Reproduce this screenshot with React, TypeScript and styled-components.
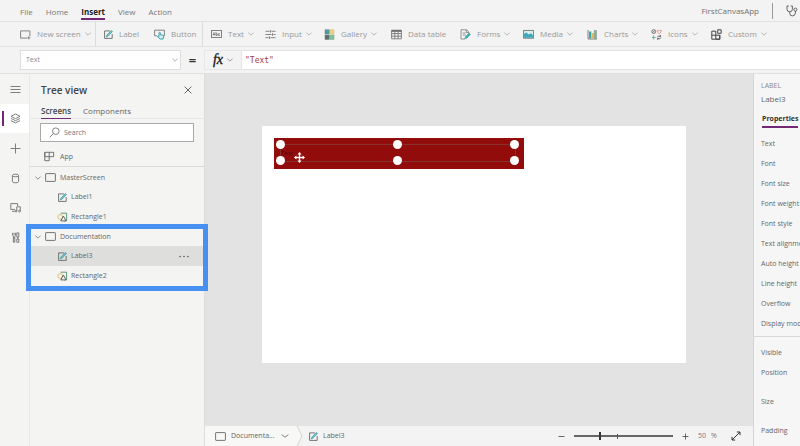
import React from "react";
import styled, { createGlobalStyle, css } from "styled-components";

const GlobalStyle = createGlobalStyle`
  * { box-sizing: border-box; }
  html, body, #root { height: 100%; }
  body { margin: 0; overflow: hidden; font-family: "Open Sans", "Noto Sans", sans-serif; font-size: 8px; line-height: 12px; color: #666; background: #f3f3f3; }
  button, input, select { font: inherit; color: inherit; margin: 0; padding: 0; border: 0; background: none; border-radius: 0; outline: none; }
  button { cursor: pointer; white-space: nowrap; }
  svg { display: block; flex: none; overflow: visible; }
  h2, p, ul { margin: 0; padding: 0; font-weight: 400; list-style: none; }
`;

const purple = "#742774";

const Shell = styled.div`
  height: 100vh;
  display: flex;
  flex-direction: column;
  background: #f3f3f3;
`;

const MenuBar = styled.header`
  height: 22px;
  display: flex;
  justify-content: space-between;
  padding: 0 2px 0 20px;
  border-bottom: 1px solid #e2e2e2;
`;

const Menu = styled.nav`
  display: flex;
  gap: 13px;
  padding-top: 6px;
`;

const MenuItem = styled.button<{ $active?: boolean }>`
  height: 14px;
  line-height: 12px;
  border-bottom: 2px solid transparent;
  color: #777;
  ${(p) => p.$active && css`color: #222; font-weight: 700; border-color: ${purple};`}
`;

const AppInfo = styled.div`
  display: flex;
  align-items: center;
  gap: 13px;
  color: #707070;
`;

const InfoDivider = styled.span`
  width: 1px;
  height: 16px;
  background: #999;
`;

const Toolbar = styled.div`
  height: 25px;
  display: grid;
  grid-template-columns: 76px 58px 49px 62px 59px 67px 69px 63px 64px 64px 60px 60px;
  align-items: stretch;
  padding-left: 20px;
  border-bottom: 1px solid #e2e2e2;
`;

const Tool = styled.button<{ $divided?: boolean; $inset?: boolean }>`
  display: flex;
  align-items: center;
  gap: 6px;
  color: #999;
  padding-left: ${(p) => (p.$inset ? 8 : 0)}px;
  border-right: ${(p) => (p.$divided ? "1px solid #dcdcdc" : "0")};
`;

const ToolText = styled.span`
  display: flex;
  align-items: center;
  gap: 4px;
`;

const FormulaBar = styled.div`
  height: 27px;
  display: flex;
  align-items: center;
  padding-left: 20px;
  border-bottom: 1px solid #e0e0e0;
`;

const PropertyPicker = styled.label`
  display: grid;
  width: 161px;
  height: 20px;
  align-items: center;
  background: #fff;
  border: 1px solid #dedede;
  color: #8a8a8a;
  & > * { grid-area: 1 / 1; }
  & > svg { justify-self: end; margin-right: 2px; pointer-events: none; }
`;

const PropertySelect = styled.select`
  appearance: none;
  width: 100%;
  height: 18px;
  padding-left: 5px;
  font-size: 7px;
`;

const EqualSign = styled.span`
  width: 23px;
  text-align: center;
  font-size: 13px;
  line-height: 20px;
  font-weight: 700;
  color: #333;
`;

const FxButton = styled.button`
  width: 38px;
  height: 20px;
  display: flex;
  align-items: center;
  justify-content: center;
  gap: 4px;
  border: 1px solid #e6e6e6;
  color: #777;
`;

const FxMark = styled.span`
  font: italic 400 14px/16px "Liberation Serif", serif;
  color: #111;
  -webkit-text-stroke: 0.3px #111;
`;

const FormulaInput = styled.input`
  flex: 1;
  min-width: 0;
  height: 20px;
  padding-left: 3px;
  background: #fff;
  border: solid #e2e2e2;
  border-width: 1px 0;
  color: #a5403c;
  font-family: "DejaVu Sans Mono", monospace;
`;

const Workspace = styled.div`
  flex: 1;
  min-height: 0;
  display: flex;
`;

const Rail = styled.nav`
  width: 30px;
  flex: none;
  display: grid;
  grid-auto-rows: 30px 29px 30px;
  border-right: 1px solid #e8e8e8;
  background: #f4f4f3;
`;

const RailButton = styled.button<{ $active?: boolean }>`
  display: grid;
  place-items: center;
  color: #707070;
  border-left: 2px solid transparent;
  ${(p) => p.$active && css`
    background: #fff;
    &::before { content: ""; grid-area: 1 / 1; justify-self: start; width: 2px; height: 15px; background: ${purple}; }
    & > svg { grid-area: 1 / 1; }
  `}
`;

const TreePanel = styled.aside`
  width: 175px;
  flex: none;
  background: #f4f4f3;
  border-right: 1px solid #dedede;
`;

const TreeHeader = styled.div`
  height: 31px;
  display: flex;
  align-items: center;
  justify-content: space-between;
  padding: 0 12px 0 11px;
`;

const TreeTitle = styled.h2`
  font-size: 10px;
  line-height: 14px;
  font-weight: 600;
  color: #444;
`;

const IconButton = styled.button`
  display: grid;
  place-items: center;
  color: #555;
`;

const Tabs = styled.div`
  height: 14px;
  display: flex;
  gap: 12px;
  padding-left: 11px;
  border-bottom: 1px solid #e8e8e8;
`;

const Tab = styled.button<{ $active?: boolean }>`
  height: 14px;
  line-height: 10px;
  padding-bottom: 2px;
  border-bottom: 1px solid transparent;
  color: #666;
  ${(p) => p.$active && css`color: #444; font-weight: 600; border-color: ${purple};`}
`;

const SearchBox = styled.label`
  height: 19px;
  display: flex;
  align-items: center;
  gap: 4px;
  margin: 4px 10px 5px 10px;
  padding-left: 8px;
  background: #fff;
  border: 1px solid #aaa;
  color: #777;
`;

const SearchInput = styled.input`
  flex: 1;
  min-width: 0;
  font-size: 7px;
  &::placeholder { color: #777; opacity: 1; }
`;

const AppRow = styled.button`
  width: 100%;
  height: 20px;
  display: flex;
  align-items: center;
  gap: 5px;
  padding-left: 14px;
  border-bottom: 1px solid #dadada;
  font-size: 7px;
`;

const Groups = styled.div`
  padding-top: 1px;
`;

const Group = styled.section`
  position: relative;
  font-size: 7px;
`;

const GroupHeader = styled.button`
  width: 100%;
  height: 19px;
  display: flex;
  align-items: center;
  gap: 4px;
  padding-left: 5px;
`;

const TreeRow = styled.button<{ $selected?: boolean }>`
  width: 100%;
  height: 20px;
  display: flex;
  align-items: center;
  gap: 4px;
  padding: 0 15px 0 28px;
  background: ${(p) => (p.$selected ? "#dededd" : "transparent")};
`;

const RowName = styled.span`
  flex: 1;
  text-align: left;
`;

const Highlight = styled.span`
  position: absolute;
  inset: -3px -4px -5px -4px;
  border: 5px solid #4690f2;
  pointer-events: none;
`;

const Stage = styled.main`
  flex: 1;
  min-width: 0;
  display: flex;
  flex-direction: column;
  background: #e3e3e3;
`;

const StageArea = styled.div`
  flex: 1;
  display: flex;
  padding: 52px 67px 63px 57px;
`;

const Page = styled.div`
  position: relative;
  flex: 1;
  background: #fff;
`;

const RedRectangle = styled.div`
  position: absolute;
  left: 12px;
  top: 12px;
  width: 250px;
  height: 31px;
  background: #930c0c;
`;

const SelectedLabel = styled.div`
  position: absolute;
  left: 6px;
  top: 6px;
  width: 236px;
  height: 18px;
  border: 1px solid #863229;
  color: #4a0404;
  font-size: 6px;
  line-height: 16px;
`;

const Handle = styled.span<{ $x: string; $y: string }>`
  position: absolute;
  left: ${(p) => p.$x};
  top: ${(p) => p.$y};
  width: 9px;
  height: 9px;
  margin: -5px 0 0 -5px;
  border-radius: 50%;
  background: #fff;
`;

const MoveCursor = styled.svg`
  position: absolute;
  left: 13px;
  top: 7px;
`;

const StageFooter = styled.footer`
  height: 20px;
  display: flex;
  align-items: center;
  justify-content: space-between;
  background: #f3f3f3;
  font-size: 7px;
`;

const Crumbs = styled.div`
  display: flex;
  align-items: center;
  height: 100%;
`;

const Crumb = styled.button<{ $lead?: boolean }>`
  height: 100%;
  display: flex;
  align-items: center;
  gap: 5px;
  padding-left: ${(p) => (p.$lead ? 10 : 6)}px;
  width: ${(p) => (p.$lead ? "92px" : "auto")};
  background: ${(p) => (p.$lead ? "#f8f8f7" : "transparent")};
`;

const CrumbText = styled.span<{ $wide?: boolean }>`
  width: ${(p) => (p.$wide ? "45px" : "auto")};
  text-align: left;
`;

const ZoomTools = styled.div`
  display: flex;
  align-items: center;
  gap: 9px;
  padding-right: 12px;
`;

const ZoomRange = styled.input`
  appearance: none;
  width: 99px;
  height: 8px;
  background:
    linear-gradient(#555, #555) 43px 50% / 1px 5px no-repeat,
    linear-gradient(#666, #666) 0 50% / 100% 2px no-repeat;
  &::-webkit-slider-thumb { appearance: none; width: 2px; height: 8px; background: #333; }
`;

const ZoomValue = styled.span`
  display: flex;
  gap: 5px;
  width: 24px;
  color: #777;
`;

const Properties = styled.aside`
  width: 47px;
  flex: none;
  overflow: hidden;
  padding-top: 6px;
  background: #f6f6f6;
  border-left: 1px solid #d4d4d4;
  white-space: nowrap;
  font-size: 7px;
`;

const Kind = styled.p`
  padding-left: 7px;
  line-height: 12px;
  color: #8a8a8a;
`;

const ControlName = styled.h2`
  padding-left: 7px;
  font-size: 8px;
  line-height: 14px;
  color: #666;
`;

const PropertyTab = styled.button`
  display: block;
  margin: 7px 0 6px 8px;
  height: 15px;
  font-size: 7px;
  line-height: 11px;
  padding-bottom: 2px;
  font-weight: 700;
  color: #333;
  border-bottom: 2px solid ${purple};
`;

const PropertyList = styled.ul<{ $divided?: boolean }>`
  padding-top: ${(p) => (p.$divided ? 6 : 0)}px;
  margin-top: ${(p) => (p.$divided ? 2 : 0)}px;
  border-top: ${(p) => (p.$divided ? "1px solid #d8d8d8" : "0")};
`;

const PropertyRow = styled.li<{ $tall?: boolean }>`
  height: ${(p) => (p.$tall ? 29 : 20)}px;
  padding: ${(p) => (p.$tall ? 13 : 4)}px 0 0 7px;
`;

type IconProps = { children: React.ReactNode; w?: number; h?: number };
const Glyph = ({ children, w = 11, h = 11 }: IconProps) => (
  <svg width={w} height={h} viewBox={`0 0 ${w} ${h}`} fill="none" stroke="currentColor" strokeWidth="0.9" aria-hidden="true">
    {children}
  </svg>
);

const Chevron = ({ w = 6 }: { w?: number }) => (
  <svg width={w} height={4} viewBox="0 0 6 4" preserveAspectRatio="none" fill="none" stroke="currentColor" strokeWidth="0.7" aria-hidden="true">
    <path d="M.4 .6 3 3.2 5.6 .6" />
  </svg>
);

const ScreenIcon = () => <Glyph><rect x=".6" y="1.6" width="9.8" height="7.8" rx=".5" /></Glyph>;
const NewScreenIcon = () => <Glyph><path d="M7 9.1H.6V1.9h9.3v5.3M8.8 7.3v3M7.3 8.8h3" stroke="#777" /></Glyph>;
const LabelIcon = () => (
  <Glyph w={9} h={9}>
    <path d="M6 .9H.6v7.5h7.6V4" stroke="#666" />
    <path d="M2.2 7 3 4.9 7.3.5l1.2 1-4.3 4.6Z" fill="#6fc0c4" stroke="#2d8d95" strokeWidth=".6" />
  </Glyph>
);
const ButtonIcon = () => (
  <Glyph>
    <path d="M3 6.8H.6V1.2h9.8v5.6H9" stroke="#777" />
    <path d="M5 7.5V3.7q.7-.8 1.3 0v2l2.8.6q.8.2.6 1L9 10H6L3.5 7.4q.3-1 1.5.1Z" stroke="#259ba3" fill="#d9f0f1" />
  </Glyph>
);
const TextIcon = () => (
  <Glyph>
    <rect x=".5" y="1.5" width="10" height="7" stroke="#777" />
    <path d="m2 6.5 1-3 1 3M2.4 5.5h1.3M5 3.2v3.3h1.2V4.7H5M9 4.7H7.6v1.8H9" stroke="#666" strokeWidth=".7" />
  </Glyph>
);
const InputIcon = () => (
  <Glyph><path d="M.5 2.3h4m2 0h4M.5 5.5h6m2 0h2M.5 8.7h3m2 0h5M5.5 1v2.6M7.5 4.2v2.6M4.5 7.4V10" stroke="#777" /></Glyph>
);
const GalleryIcon = () => (
  <Glyph>
    <rect x="1" y=".8" width="4.2" height="4.2" fill="#45a1a4" stroke="#778" strokeWidth=".5" />
    <rect x="6" y=".8" width="4" height="4.2" fill="#f1cf86" stroke="#dcb86e" strokeWidth=".5" />
    <rect x="1" y="6" width="4.2" height="4.5" fill="#5a6f70" stroke="#777" strokeWidth=".5" />
    <rect x="6" y="6" width="4" height="4.5" fill="#83c29b" stroke="#70a98a" strokeWidth=".5" />
  </Glyph>
);
const TableIcon = () => (
  <Glyph>
    <path d="M.6 1.2h9.8v8.6H.6ZM.6 4.6h9.8M.6 7.2h9.8M3.8 2v7.8M7.1 2v7.8" stroke="#777" />
    <path d="M.6 2h9.8" stroke="#666" strokeWidth="1.6" />
  </Glyph>
);
const FormsIcon = () => (
  <Glyph>
    <path d="M5 10H1V.8h5.5L9 3.2v2M6.3.8v2.7H9M2.7 4h3M2.7 6h3" stroke="#888" />
    <path d="m4.8 9.8.5-2L9 4l1.5 1.5-3.7 3.8Z" fill="#44aeb5" stroke="#369ca4" strokeWidth=".5" />
  </Glyph>
);
const MediaIcon = () => (
  <Glyph>
    <rect x=".6" y="1.4" width="9.8" height="7.8" fill="#d8eef2" stroke="#777" />
    <path d="M1 8.8V5l2.3-1.6 2.5 2.2L8 4.3l2 2v2.5Z" fill="#42a8b5" stroke="none" />
  </Glyph>
);
const ChartsIcon = () => (
  <Glyph>
    <path d="M1 1v9h9" stroke="#777" />
    <path d="M2 2.5h2.3v7H2Z" fill="#3aa3ad" stroke="none" />
    <path d="M4.6 4h2.2v5.5H4.6Z" fill="#dfb85f" stroke="none" />
    <path d="M7.2 1.5h2.3v8H7.2Z" fill="#84b38f" stroke="#777" strokeWidth=".4" />
  </Glyph>
);
const IconsIcon = () => (
  <Glyph>
    <circle cx="2.7" cy="2.6" r="1.9" stroke="#666" /><path d="m1.5 3.8 2.4-2.4" stroke="#666" />
    <path d="M8.2 4.8 6.3 3V1.4h1.2l.7.7.7-.7h1.2V3Z" stroke="#e1907d" />
    <path d="M2.7 6.5v4M.8 8.5h3.8" stroke="#61a89c" />
    <path d="M6.2 8.4q.7-2 3.3-1.3M9.6 6v1.5H8M10 8.4q-.5 2-3.2 1.4M6.5 10.8V9.4H8" stroke="#666" />
  </Glyph>
);
const CustomIcon = () => (
  <Glyph><path d="M.8 2.2h4v8h-4ZM.8 6.2h8v4h-4M8.8 6.2v4h-4M6.7.8h3.5v3.5H6.7Z" stroke="#444" strokeWidth="1" /></Glyph>
);
const ShapeIcon = () => (
  <Glyph w={9} h={10}>
    <path d="M2.6 1.2h6v7.6H6" stroke="#4d8e67" />
    <circle cx="2.2" cy="5" r="2.4" stroke="#d9bd78" fill="#f7f2e2" />
    <path d="M5.4 4 8 8.9H2.8Z" stroke="#555" fill="#f4f4f3" />
  </Glyph>
);
const AppIcon = () => <Glyph><path d="M.8 1.3h8.8v4.4H.8ZM5.2 1.3v8.4M.8 1.3v8.4h4.4" /></Glyph>;
const Stethoscope = () => (
  <Glyph w={12} h={12}>
    <path d="M2.8 1H1v3.2q0 2.6 2.7 2.6t2.7-2.6V1H4.7M3.7 6.8v1.4q0 2.7 2.7 2.7t3-2.8V6" stroke="#555" />
    <circle cx="9.4" cy="4.6" r="1.5" stroke="#555" />
  </Glyph>
);
const CloseIcon = () => <Glyph w={8} h={8}><path d="m.6.6 6.8 6.8m0-6.8L.6 7.4" /></Glyph>;
const SearchIcon = () => <Glyph><circle cx="6.8" cy="4.2" r="3.3" /><path d="m4.4 6.6-3.7 3.7" /></Glyph>;
const MoreIcon = () => (
  <Glyph w={10} h={3}><g fill="#555" stroke="none"><circle cx="1" cy="1.5" r=".8" /><circle cx="5" cy="1.5" r=".8" /><circle cx="9" cy="1.5" r=".8" /></g></Glyph>
);
const MinusIcon = () => <Glyph w={7} h={7}><path d="M.5 3.5h6" stroke="#555" /></Glyph>;
const PlusIcon = () => <Glyph w={7} h={7}><path d="M.5 3.5h6m-3-3v6" stroke="#555" /></Glyph>;
const FitIcon = () => <Glyph w={10} h={10}><path d="m1 9 8-8M5.8 1H9v3.2M1 5.8V9h3.2" stroke="#333" strokeWidth="1" /></Glyph>;

const railItems = [
  { name: "Menu", icon: <path d="M.5 2.5h10m-10 3h10m-10 3h10" /> },
  { name: "Tree view", icon: <><path d="M5.5 1 10 3.3 5.5 5.6 1 3.3Z" /><path d="m1 5.4 4.5 2.3L10 5.4M1 7.6l4.5 2.3L10 7.6" /></> },
  { name: "Insert", icon: <path d="M.5 5.5h10m-5-5v10" /> },
  { name: "Data", icon: <><ellipse cx="5.5" cy="2.5" rx="3.1" ry="1.3" /><path d="M2.4 2.5v6q0 1.3 3.1 1.3t3.1-1.3v-6" /></> },
  { name: "Media", icon: <><path d="M5 7.4H.8V1.6h6.8V4M2 9.3h2.8M6.8 9V4.8h3.5v4" /><circle cx="6" cy="9.1" r=".9" /><circle cx="9.5" cy="9.1" r=".9" /></> },
  { name: "Advanced tools", icon: <path d="M2.6.8v2.4l.8.8v6.2H4.8V4l.8-.8V.8M4.1.8v2M3.4 6h1.4M6.8.9h2v4.2h-2ZM7.8 5v2M6.8 7h2v3.3h-2Z" /> },
];

const tools = [
  { name: "New screen", icon: <NewScreenIcon />, menu: true, divided: true },
  { name: "Label", icon: <LabelIcon />, inset: true },
  { name: "Button", icon: <ButtonIcon />, divided: true },
  { name: "Text", icon: <TextIcon />, menu: true, inset: true },
  { name: "Input", icon: <InputIcon />, menu: true },
  { name: "Gallery", icon: <GalleryIcon />, menu: true },
  { name: "Data table", icon: <TableIcon /> },
  { name: "Forms", icon: <FormsIcon />, menu: true },
  { name: "Media", icon: <MediaIcon />, menu: true },
  { name: "Charts", icon: <ChartsIcon />, menu: true },
  { name: "Icons", icon: <IconsIcon />, menu: true },
  { name: "Custom", icon: <CustomIcon />, menu: true },
];

const groups = [
  { screen: "MasterScreen", label: "Label1", shape: "Rectangle1" },
  { screen: "Documentation", label: "Label3", shape: "Rectangle2", current: true },
];

const textProperties = ["Text", "Font", "Font size", "Font weight", "Font style", "Text alignment", "Auto height", "Line height", "Overflow", "Display mode"];

export default function App() {
  return (
    <Shell>
      <GlobalStyle />
      <MenuBar>
        <Menu>
          {["File", "Home", "Insert", "View", "Action"].map((item) => (
            <MenuItem key={item} $active={item === "Insert"}>{item}</MenuItem>
          ))}
        </Menu>
        <AppInfo>
          <span>FirstCanvasApp</span>
          <InfoDivider />
          <IconButton aria-label="App checker"><Stethoscope /></IconButton>
        </AppInfo>
      </MenuBar>

      <Toolbar role="toolbar">
        {tools.map((tool) => (
          <Tool key={tool.name} $divided={tool.divided} $inset={tool.inset}>
            {tool.icon}
            <ToolText>{tool.name}{tool.menu && <Chevron />}</ToolText>
          </Tool>
        ))}
      </Toolbar>

      <FormulaBar>
        <PropertyPicker>
          <PropertySelect aria-label="Property" defaultValue="Text"><option>Text</option></PropertySelect>
          <Chevron />
        </PropertyPicker>
        <EqualSign>=</EqualSign>
        <FxButton aria-label="Function"><FxMark>fx</FxMark><Chevron /></FxButton>
        <FormulaInput aria-label="Formula" defaultValue={'"Text"'} />
      </FormulaBar>

      <Workspace>
        <Rail>
          {railItems.map((item) => (
            <RailButton key={item.name} aria-label={item.name} $active={item.name === "Tree view"}>
              <Glyph>{item.icon}</Glyph>
            </RailButton>
          ))}
        </Rail>

        <TreePanel>
          <TreeHeader>
            <TreeTitle>Tree view</TreeTitle>
            <IconButton aria-label="Close"><CloseIcon /></IconButton>
          </TreeHeader>
          <Tabs>
            <Tab $active>Screens</Tab>
            <Tab>Components</Tab>
          </Tabs>
          <SearchBox>
            <SearchIcon />
            <SearchInput aria-label="Search" placeholder="Search" />
          </SearchBox>
          <AppRow><AppIcon />App</AppRow>
          <Groups>
            {groups.map((group) => (
              <Group key={group.screen}>
                <GroupHeader><Chevron /><ScreenIcon />{group.screen}</GroupHeader>
                <TreeRow $selected={group.current}>
                  <LabelIcon />
                  <RowName>{group.label}</RowName>
                  {group.current && <MoreIcon />}
                </TreeRow>
                <TreeRow><ShapeIcon /><RowName>{group.shape}</RowName></TreeRow>
                {group.current && <Highlight />}
              </Group>
            ))}
          </Groups>
        </TreePanel>

        <Stage>
          <StageArea>
            <Page>
              <RedRectangle>
                <SelectedLabel>
                  Text
                  {["0%", "50%", "100%"].map((x) => ["0%", "100%"].map((y) => <Handle key={x + y} $x={x} $y={y} />))}
                  <MoveCursor width="11" height="11" viewBox="0 0 11 11">
                    <path d="M5.5 1v9M1 5.5h9" stroke="#fff" strokeWidth="1.3" />
                    <path d="m5.5 0 2 2.4h-4ZM5.5 11l2-2.4h-4ZM0 5.5l2.4-2v4ZM11 5.5l-2.4-2v4Z" fill="#fff" />
                  </MoveCursor>
                </SelectedLabel>
              </RedRectangle>
            </Page>
          </StageArea>
          <StageFooter>
            <Crumbs>
              <Crumb $lead><ScreenIcon /><CrumbText $wide>Documenta...</CrumbText><Chevron w={8} /></Crumb>
              <svg width="6" height="20" viewBox="0 0 6 20" aria-hidden="true">
                <path d="M0 0 5 10 0 20Z" fill="#f8f8f7" />
                <path d="M0 0 5 10 0 20" fill="none" stroke="#ccc" strokeWidth=".8" />
              </svg>
              <Crumb><LabelIcon /><CrumbText>Label3</CrumbText></Crumb>
            </Crumbs>
            <ZoomTools>
              <IconButton aria-label="Zoom out"><MinusIcon /></IconButton>
              <ZoomRange type="range" aria-label="Zoom" min="0" max="100" defaultValue="26" />
              <IconButton aria-label="Zoom in"><PlusIcon /></IconButton>
              <ZoomValue><span>50</span><span>%</span></ZoomValue>
              <IconButton aria-label="Fit to window"><FitIcon /></IconButton>
            </ZoomTools>
          </StageFooter>
        </Stage>

        <Properties>
          <Kind>LABEL</Kind>
          <ControlName>Label3</ControlName>
          <PropertyTab>Properties</PropertyTab>
          <PropertyList>
            {textProperties.map((name) => <PropertyRow key={name}>{name}</PropertyRow>)}
          </PropertyList>
          <PropertyList $divided>
            <PropertyRow>Visible</PropertyRow>
            <PropertyRow>Position</PropertyRow>
            <PropertyRow $tall>Size</PropertyRow>
            <PropertyRow $tall>Padding</PropertyRow>
          </PropertyList>
        </Properties>
      </Workspace>
    </Shell>
  );
}
